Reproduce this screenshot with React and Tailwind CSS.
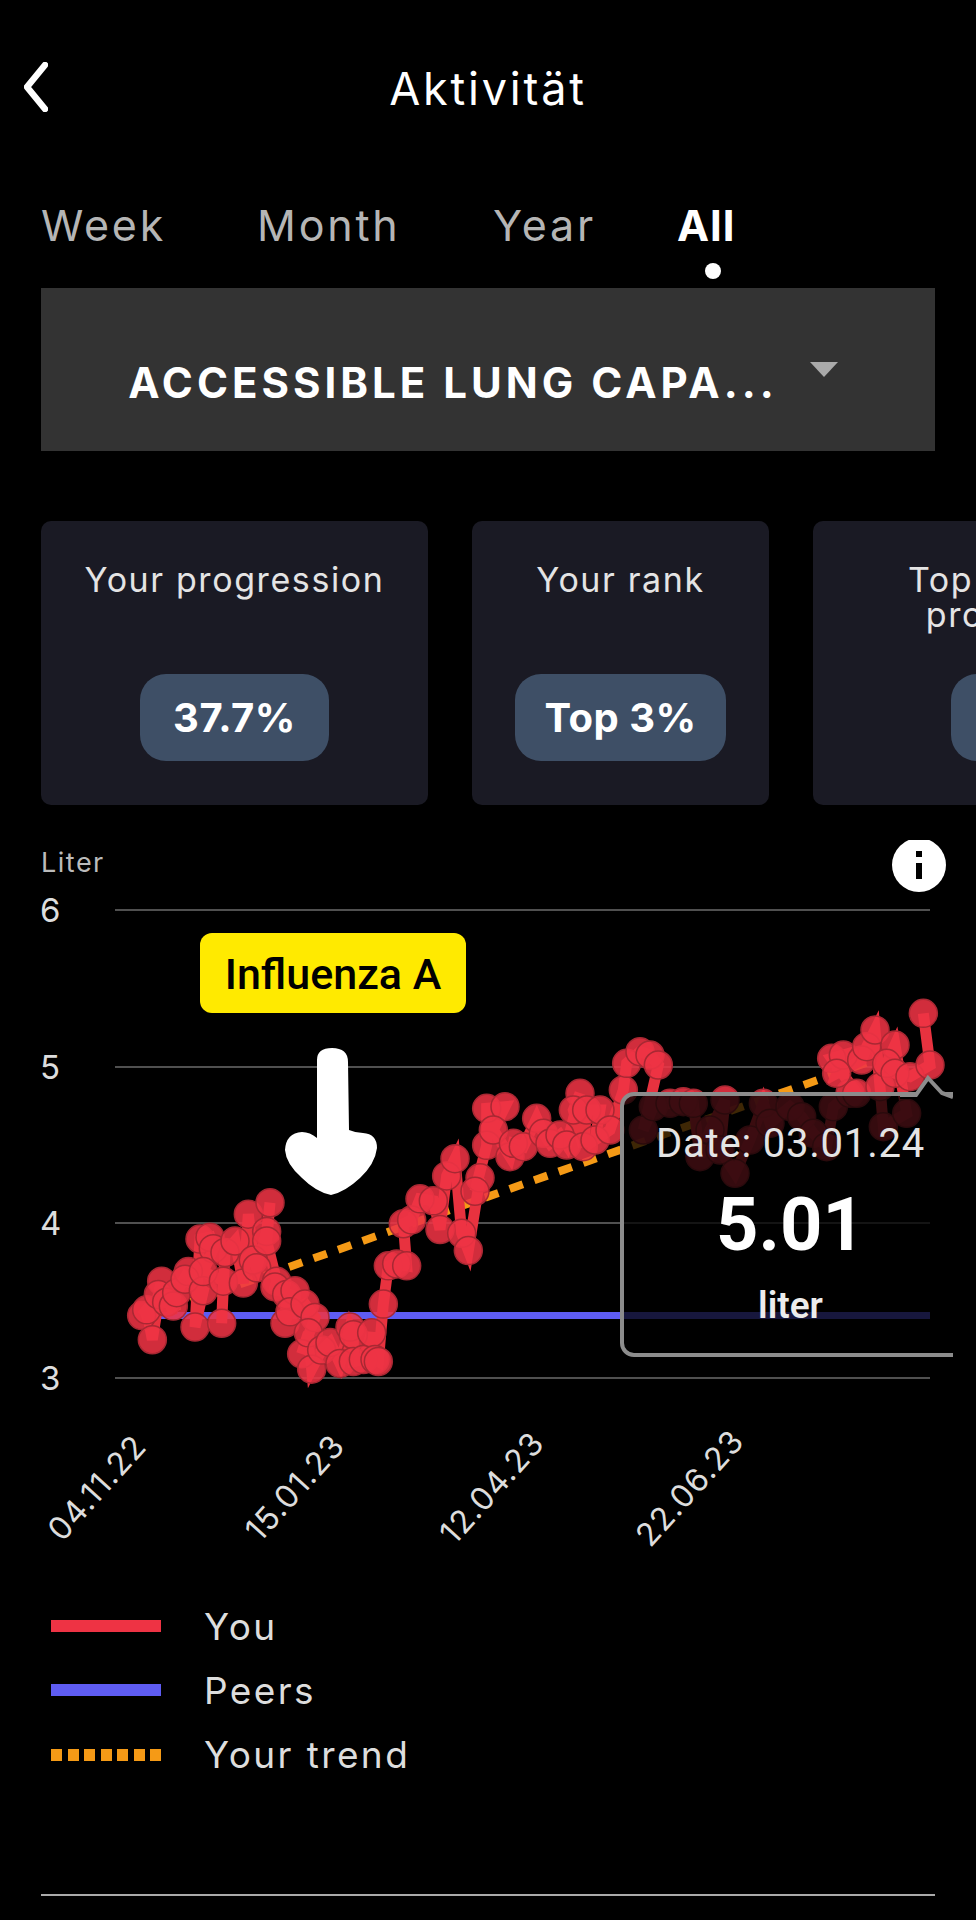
import React from "react";

/* points read off the chart, in page pixels */
const LEFT = [
  [425,1295],[440,1280],[457,1358],[485,1205],[475,1240],[500,1260],[520,1270],[530,1235],[565,1180],[555,1200],
  [610,1230],[585,1325],[600,1095],[630,1090],[640,1120],[610,1180],[670,1205],[665,1315],[675,1130],[705,1100],[730,1210],[745,1030],
  [760,1150],[770,1170],[800,1075],[810,1000],[800,1100],[830,1205],[825,1220],[860,1240],[855,1315],[885,1230],[870,1285],
  [915,1265],[945,1300],[905,1395],[925,1340],[935,1435],[965,1385],[990,1365],[1020,1420],[1050,1325],[1060,1345],[1060,1415],
  [1090,1410],[1115,1340],[1125,1410],[1135,1415],[1150,1265],[1165,1165],[1190,1160],[1220,1165],[1210,1055],[1235,1045],
  [1260,990],[1300,995],[1320,1070],[1340,930],[1365,885],[1385,1080],[1405,1125],[1440,935],[1425,970],[1460,850],
].map(([x, y]) => [x / 3, 820 + y / 2.613]);

const RIGHT = [
  [20,445],[75,440],[40,510],[90,590],[100,550],[130,560],[170,475],[190,520],[210,550],[240,525],[260,555],
  [300,400],[280,450],[310,560],[320,450],[360,450],[345,540],[390,510],[430,390],[440,310],[480,275],[510,285],[535,315],
  [490,510],[520,440],[570,430],[610,425],[640,430],[660,590],[690,510],[735,420],[720,570],[765,640],[810,540],[850,430],
  [870,490],[930,440],[965,470],[1000,520],[1040,560],[1060,440],[1110,400],[1130,400],[1055,295],[1090,285],[1070,340],
  [1145,300],[1160,260],[1185,210],[1200,380],[1210,500],[1280,460],[1245,255],[1220,310],[1245,340],[1290,350],[1350,315],[1330,160],
].map(([x, y]) => [480 + x / 3, 960 + y / 3]);

const POINTS = [...LEFT, ...RIGHT];
const GRID = [
  { label: "6", y: 910 },
  { label: "5", y: 1067 },
  { label: "4", y: 1223 },
  { label: "3", y: 1378 },
];
const DATES = [
  { label: "04.11.22", x: 97 },
  { label: "15.01.23", x: 295 },
  { label: "12.04.23", x: 492 },
  { label: "22.06.23", x: 690 },
];
const TABS = [
  { label: "Week", width: "w-[216px]" },
  { label: "Month", width: "w-[236px]" },
  { label: "Year", width: "w-[184px]" },
];

const Card = ({ title, value, className, pill }) => (
  <div className={`shrink-0 h-[284px] rounded-[10px] bg-[#1a1a24] pt-[41px] flex flex-col items-center ${className}`}>
    <div className="h-[112px] text-[34px] leading-[35px] tracking-[1.6px] whitespace-nowrap text-center text-[#e4e4e4]">{title}</div>
    <div className={`h-[87px] rounded-[26px] bg-[#3e4f66] flex items-center justify-center text-[40px] tracking-[0.5px] font-bold text-white ${pill}`}>
      {value}
    </div>
  </div>
);

const Chart = () => (
  <div className="relative mt-[35px] h-[740px]">
    <svg width="976" height="740" viewBox="0 840 976 740" className="block">
      {GRID.map((g) => (
        <g key={g.label}>
          <line x1="115" x2="930" y1={g.y} y2={g.y} stroke="#505050" strokeWidth="2" />
          <text x="40" y={g.y + 12} fontSize="33" fill="#dddddd" fontFamily="Inter">{g.label}</text>
        </g>
      ))}
      <text x="41" y="872" fontSize="27" letterSpacing="1.5" fill="#bbbbbb" fontFamily="Inter">Liter</text>

      <line x1="158" x2="930" y1="1315.5" y2="1315.5" stroke="#5e5cf2" strokeWidth="7" />
      <line x1="142" y1="1319" x2="880" y2="1058" stroke="#f59a16" strokeWidth="8" strokeDasharray="14 12" />

      <polyline
        points={POINTS.map((p) => p.join(",")).join(" ")}
        fill="none"
        stroke="#e8323f"
        strokeWidth="11"
      />
      {POINTS.map(([x, y], i) => (
        <circle key={i} cx={x} cy={y} r="14" fill="#ee3344" fillOpacity="0.88" stroke="#a82833" strokeWidth="1.5" />
      ))}

      {DATES.map((d) => (
        <text
          key={d.label}
          x={d.x}
          y="1499"
          fontSize="32"
          letterSpacing="1"
          fill="#dddddd"
          fontFamily="Inter"
          textAnchor="middle"
          transform={`rotate(-48 ${d.x} 1488)`}
        >
          {d.label}
        </text>
      ))}

      {/* hand drawn arrow */}
      <path
        d="M317 1060 Q317 1048 332 1048 Q348 1048 348 1062 L349 1130 Q356 1133 363 1133 Q377 1134 377 1148 Q375 1164 360 1178 Q345 1192 331 1195 Q316 1192 302 1178 Q286 1164 285 1150 Q286 1133 302 1132 Q310 1132 317 1138 Z"
        fill="#ffffff"
      />

      {/* info */}
      <circle cx="919" cy="865" r="27" fill="#ffffff" />
      <rect x="916" y="851" width="6" height="6" fill="#000000" />
      <rect x="916" y="863" width="6" height="16" fill="#000000" />
    </svg>

    <div className="absolute left-[200px] top-[93px] w-[266px] h-[80px] pt-[3px] rounded-xl bg-[#ffea00] flex items-center justify-center text-[43px] font-medium text-black font-['Roboto',sans-serif]">
      Influenza A
    </div>

    {/* tooltip, clipped at its right side */}
    <div className="absolute left-[620px] top-[235px] w-[333px] h-[285px] overflow-hidden font-['Roboto',sans-serif]">
      <div className="absolute left-0 top-[17px] w-[400px] h-[265px] rounded-[14px] border-[4px] border-[#8c8c8c] bg-black/75" />
      <svg width="53" height="24" viewBox="0 0 53 24" className="absolute left-[280px] top-0">
        <path d="M0 20 L16 20 L28 3 L42 18 L53 22 L53 30 L0 30 Z" fill="#000000" />
        <path d="M0 20 L16 20 L28 3 L42 18 L53 22" fill="none" stroke="#8c8c8c" strokeWidth="4" />
      </svg>
      <div className="relative flex flex-col items-center pl-2 pt-[46px]">
        <div className="text-[40px] leading-[46px] tracking-[0.8px] text-[#e4e4e4]">Date: 03.01.24</div>
        <div className="mt-[18px] text-[74px] leading-[80px] font-bold text-white">5.01</div>
        <div className="mt-[21px] text-[37px] leading-[40px] font-semibold text-[#ececec]">liter</div>
      </div>
    </div>
  </div>
);

const App = () => {
  return (
    <div className="w-[976px] h-[1920px] bg-black overflow-hidden font-['Inter',sans-serif]">
      {/* HEADER */}
      <div className="h-[114px] pt-[60px] px-6 flex items-center justify-between">
        <svg width="24" height="50" viewBox="0 0 24 50">
          <path d="M21 3 L3 25 L21 47" fill="none" stroke="#ffffff" strokeWidth="6.5" strokeLinecap="round" strokeLinejoin="round" />
        </svg>
        <div className="mt-1 text-[45px] tracking-[2.8px] text-white">Aktivität</div>
        <div className="w-6" />
      </div>

      {/* TABS */}
      <div className="h-[88px] mt-[86px] pl-[41px] flex items-start">
        {TABS.map((t) => (
          <div key={t.label} className={`${t.width} text-[43px] leading-[50px] tracking-[2.8px] text-[#b5b5b5]`}>{t.label}</div>
        ))}
        <div className="flex flex-col items-center">
          <div className="text-[43px] leading-[50px] tracking-[1px] font-bold text-white">All</div>
          <div className="w-4 h-4 rounded-full bg-white mt-[13px] ml-[14px]" />
        </div>
      </div>

      {/* SELECT */}
      <div className="mx-[41px] h-[163px] pr-[10px] bg-[#333333] flex items-center justify-center">
        <div className="mt-[26px] text-[42px] font-bold tracking-[4px] text-white whitespace-nowrap">
          ACCESSIBLE LUNG CAPA...
        </div>
        <div className="ml-[32px] w-0 h-0 border-x-[14px] border-x-transparent border-t-[15px] border-t-[#aaaaaa]" />
      </div>

      {/* CARDS */}
      <div className="mt-[70px] pl-[41px] flex gap-[44px] overflow-hidden">
        <Card title="Your progression" value="37.7%" className="w-[387px]" pill="w-[189px]" />
        <Card title="Your rank" value="Top 3%" className="w-[297px]" pill="w-[211px]" />
        <Card
          title={<>Top 5% peers<br />progression</>}
          value=""
          className="w-[434px]"
          pill="w-[158px]"
        />
      </div>

      <Chart />

      {/* LEGEND */}
      <div className="mt-[15px] pl-[51px] flex flex-col">
        <div className="h-16 flex items-center gap-[43px]">
          <div className="w-[110px] h-3 -mt-[2px] bg-[#ee3344]" />
          <div className="text-[37px] tracking-[2.4px] text-[#dddddd]">You</div>
        </div>
        <div className="h-16 flex items-center gap-[43px]">
          <div className="w-[110px] h-3 -mt-[2px] bg-[#5e5cf2]" />
          <div className="text-[37px] tracking-[2.4px] text-[#dddddd]">Peers</div>
        </div>
        <div className="h-16 flex items-center gap-[43px]">
          <div className="w-[110px] h-3 flex justify-between">
            {[0, 1, 2, 3, 4, 5, 6].map((i) => (
              <div key={i} className="w-[11px] h-3 bg-[#f59a16]" />
            ))}
          </div>
          <div className="text-[37px] tracking-[2.4px] text-[#dddddd]">Your trend</div>
        </div>
      </div>

      <div className="mt-[107px] mx-[41px] h-[2px] bg-[#aaaaaa]" />
    </div>
  );
};

export default App;
